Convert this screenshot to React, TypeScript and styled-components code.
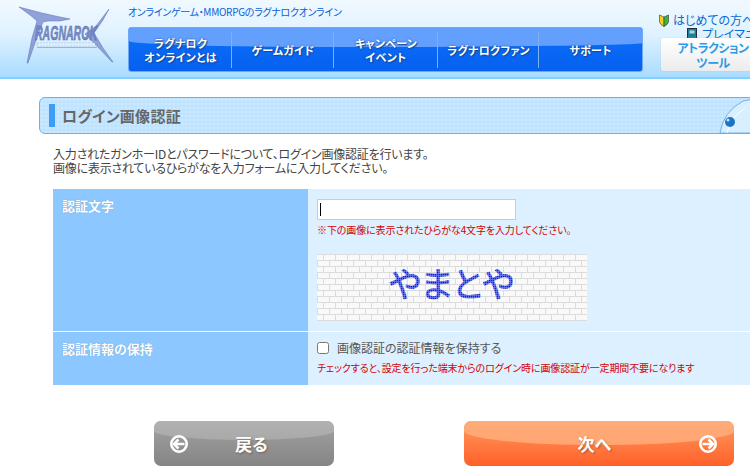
import React from "react";
import styled, { createGlobalStyle } from "styled-components";

const Global = createGlobalStyle`
  html, body { margin: 0; padding: 0; background: #fff; overflow: hidden; }
  body { width: 750px; height: 469px; font-family: "Noto Sans CJK JP", "Liberation Sans", sans-serif; font-feature-settings: "palt"; }
  #root { width: 750px; height: 469px; overflow: hidden; }
`;

const Header = styled.header`
  height: 77px;
  border-bottom: 2px solid #7fd2ff;
  background: linear-gradient(#f1f9ff 0%, #dff2ff 45%, #a9dcff 100%);
  display: flex;
  overflow: hidden;
`;
const LogoBox = styled.div`
  width: 128px;
  flex: none;
  padding: 4px 0 0 18px;
  box-sizing: border-box;
`;
const Center = styled.div`
  width: 515px;
  flex: none;
  display: flex;
  flex-direction: column;
`;
const Tagline = styled.div`
  height: 27px;
  padding-top: 5px;
  box-sizing: border-box;
  font-size: 10px;
  line-height: 14px;
  letter-spacing: -0.3px;
  color: #0a5fd8;
  white-space: nowrap;
`;
const Nav = styled.nav`
  position: relative;
  height: 45px;
  box-sizing: border-box;
  border: 1px solid #6ea6f8;
  border-radius: 3px;
  background: linear-gradient(#0b70fa, #0660f0);
  display: grid;
  grid-template-columns: 103px 102px 104px 101px 1fr;
  overflow: hidden;
  &::before {
    content: "";
    position: absolute;
    left: 0;
    right: 0;
    top: -30px;
    height: 49px;
    background: #639ffc;
    border-radius: 0 0 60% 40% / 0 0 4px 6px;
  }
`;
const NavItem = styled.div<{ $last?: boolean }>`
  position: relative;
  display: flex;
  align-items: center;
  justify-content: center;
  text-align: center;
  font-size: 11px;
  line-height: 14px;
  font-weight: 700;
  color: #fff;
  letter-spacing: 0.3px;
  text-shadow: 0 0 2px #164a9c, 1px 1px 1px #164a9c;
  &::after {
    content: "";
    display: ${(p) => (p.$last ? "none" : "block")};
    position: absolute;
    right: 0;
    top: 4px;
    bottom: 3px;
    width: 1px;
    background: #7fb0f0;
  }
`;
const Side = styled.div`
  width: 120px;
  flex: none;
  margin-left: 16px;
  font-size: 12px;
  line-height: 14px;
  color: #0a6ad0;
  white-space: nowrap;
  position: relative;
  & svg { flex: none; }
`;
const SideLink = styled.div<{ $indent: number; $top: number; $gap: number }>`
  display: flex;
  align-items: center;
  gap: ${(p) => p.$gap}px;
  padding-left: ${(p) => p.$indent}px;
  margin-top: ${(p) => p.$top}px;
`;
const ToolButton = styled.div`
  position: absolute;
  left: 2px;
  top: 38px;
  width: 104px;
  height: 33px;
  box-sizing: border-box;
  border-radius: 2px;
  background: linear-gradient(#ffffff, #ececec);
  box-shadow: 0 0 1px #9bb;
  color: #2b9be8;
  font-size: 12px;
  line-height: 15px;
  letter-spacing: -0.5px;
  font-weight: 700;
  text-align: center;
  padding-top: 2px;
`;

const Main = styled.main`
  padding-top: 18px;
`;
const TitleBar = styled.div`
  position: relative;
  margin-left: 39px;
  width: 720px;
  height: 37px;
  box-sizing: border-box;
  border: 1px solid #62b4f5;
  border-radius: 6px;
  background-color: #c0e4ff;
  background-image: radial-gradient(#cdeaff 1px, transparent 1px);
  background-size: 4px 4px;
  display: flex;
  align-items: center;
  padding-left: 9px;
  overflow: hidden;
`;
const TitleMark = styled.span`
  width: 6px;
  height: 23px;
  background: #3c9cf8;
  margin-right: 7px;
`;
const TitleText = styled.h1`
  margin: 0;
  font-size: 15px;
  font-weight: 700;
  letter-spacing: 0.3px;
  color: #666;
  line-height: 20px;
`;
const Corner = styled.svg`
  position: absolute;
  right: -1px;
  top: 0;
`;
const Intro = styled.p`
  margin: 13px 0 14px 53px;
  font-size: 12px;
  line-height: 14px;
  letter-spacing: -0.22px;
  color: #444;
  white-space: nowrap;
`;
const Table = styled.div`
  margin-left: 53px;
  display: flex;
  flex-direction: column;
  gap: 1px;
`;
const Row = styled.div<{ $h: number }>`
  display: grid;
  grid-template-columns: 255px 442px;
  height: ${(p) => p.$h}px;
`;
const Label = styled.div<{ $top: number }>`
  background: #8cc8ff;
  padding: ${(p) => p.$top}px 0 0 9px;
  font-size: 13px;
  line-height: 14px;
  font-weight: 700;
  color: #fff;
  text-shadow: 0 0 1px #5d8fc0;
`;
const Cell = styled.div<{ $top: number }>`
  background: #ddf0ff;
  padding: ${(p) => p.$top}px 0 0 9px;
`;
const InputWrap = styled.div`
  position: relative;
  width: 199px;
  height: 21px;
`;
const TextInput = styled.input`
  width: 100%;
  height: 100%;
  box-sizing: border-box;
  border: 1px solid #ccc;
  background: #fff;
  padding: 0;
  display: block;
  outline: none;
`;
const Caret = styled.span`
  position: absolute;
  left: 3px;
  top: 4px;
  width: 1px;
  height: 13px;
  background: #000;
`;
const Note = styled.div<{ $top: number }>`
  margin-top: ${(p) => p.$top}px;
  font-size: 10px;
  line-height: 13px;
  letter-spacing: -0.12px;
  color: #d40000;
  white-space: nowrap;
`;
const Captcha = styled.svg`
  display: block;
  margin-top: 18px;
`;
const CheckRow = styled.label`
  display: flex;
  align-items: center;
  font-size: 12px;
  line-height: 15px;
  color: #555;
`;
const Check = styled.input`
  width: 12px;
  height: 12px;
  margin: 0 8px 0 0;
  flex: none;
`;
const Actions = styled.div`
  margin-top: 36px;
  padding-left: 154px;
  display: flex;
  gap: 130px;
`;
const ActionButton = styled.div<{ $w: number; $next?: boolean }>`
  position: relative;
  width: ${(p) => p.$w}px;
  height: 45px;
  box-sizing: border-box;
  border-radius: 7px;
  overflow: hidden;
  display: flex;
  align-items: center;
  color: #fff;
  font-size: 17px;
  font-weight: 700;
  text-shadow: 1px 1px 2px rgba(80, 50, 30, 0.45);
  background: ${(p) =>
    p.$next ? "linear-gradient(#ff9a5e, #ff6029)" : "linear-gradient(#a2a2a2, #858585)"};
  justify-content: ${(p) => (p.$next ? "flex-end" : "flex-start")};
  gap: ${(p) => (p.$next ? 88 : 47)}px;
  padding: ${(p) => (p.$next ? "0 17px 0 0" : "0 0 0 16px")};
  &::before {
    content: "";
    position: absolute;
    left: 0;
    right: 0;
    top: -20px;
    height: ${(p) => (p.$next ? 44 : 39)}px;
    border-radius: 0 0 50% 50% / 0 0 ${(p) => (p.$next ? 14 : 9)}px ${(p) => (p.$next ? 14 : 9)}px;
    background: ${(p) =>
      p.$next ? "linear-gradient(#ffb081, #ffa572)" : "linear-gradient(#bababa, #a9a9a9)"};
  }
  & > * { position: relative; }
`;

const Logo = () => (
  <svg width="96" height="60" viewBox="0 0 96 60">
    <g fill="#8ea1d8" stroke="#5e70b0" strokeWidth="0.5">
      <polygon points="1,3 24,9 42,13 52,15 42,17 30,17 25,18 18,36 10,59 9,59 14,34 19,17 12,11" />
      <polygon points="91,5 85,16 76,29 85,44 95,58 94,58 78,41 67,30 78,22" />
    </g>
    <text
      x="17"
      y="36"
      fontFamily="'Liberation Sans', sans-serif"
      fontStyle="italic"
      fontWeight="700"
      fontSize="20"
      fill="#7a8ecb"
      stroke="#4b5d9e"
      strokeWidth="0.5"
      textLength="62"
      lengthAdjust="spacingAndGlyphs"
    >
      RAGNAROK
    </text>
    <rect x="19" y="39" width="58" height="3" fill="#e6eefc" stroke="#9fb0dc" strokeWidth="0.5" strokeDasharray="2 1" />
    <rect x="19" y="43" width="60" height="1" fill="#9fb0dc" />
  </svg>
);

const Sprout = () => (
  <svg width="10" height="13" viewBox="0 0 10 13">
    <path d="M0.5 1 L5 3 V12.5 L2 10.5 Q0.5 9 0.5 7Z" fill="#f0d020" stroke="#333" strokeWidth="0.6" />
    <path d="M9.5 1 L5 3 V12.5 L8 10.5 Q9.5 9 9.5 7Z" fill="#3cb43c" stroke="#333" strokeWidth="0.6" />
  </svg>
);
const Book = () => (
  <svg width="10" height="13" viewBox="0 0 10 13">
    <rect x="0.5" y="0.5" width="9" height="12" fill="#1e7f96" stroke="#1c3040" />
    <rect x="2.5" y="2.5" width="5" height="3" fill="#9fd8e6" />
    <rect x="1" y="11" width="8" height="1" fill="#dde" />
  </svg>
);
const CircleArrow = ({ left }: { left?: boolean }) => (
  <svg width="18" height="18" viewBox="0 0 18 18" fill="none" stroke="#fff" strokeWidth="2.6">
    <circle cx="9" cy="9" r="7.7" />
    {left ? <path d="M14.5 9H4.5M8.5 4.5L4 9l4.5 4.5" /> : <path d="M3.5 9H13.5M9.5 4.5L14 9l-4.5 4.5" />}
  </svg>
);

export default function App() {
  return (
    <>
      <Global />
      <Header>
        <LogoBox><Logo /></LogoBox>
        <Center>
          <Tagline>オンラインゲーム・MMORPGのラグナロクオンライン</Tagline>
          <Nav>
            <NavItem>ラグナロク<br />オンラインとは</NavItem>
            <NavItem>ゲームガイド</NavItem>
            <NavItem>キャンペーン<br />イベント</NavItem>
            <NavItem>ラグナロクファン</NavItem>
            <NavItem $last>サポート</NavItem>
          </Nav>
        </Center>
        <Side>
          <SideLink $indent={0} $top={13} $gap={4}><Sprout />はじめての方へ</SideLink>
          <SideLink $indent={28} $top={0} $gap={5}><Book />プレイマニュアル</SideLink>
          <ToolButton>アトラクション<br />ツール</ToolButton>
        </Side>
      </Header>
      <Main>
        <TitleBar>
          <TitleMark />
          <TitleText>ログイン画像認証</TitleText>
          <Corner width="40" height="35" viewBox="0 0 40 35">
            <path d="M1 35 Q4 14 24 3 L40 0 V35Z" fill="#d8efff" stroke="#6fb2ea" strokeWidth="1" />
            <path d="M8 35 Q11 20 26 10" fill="none" stroke="#fff" strokeWidth="1" />
            <circle cx="11" cy="24" r="5" fill="#1f72c4" />
            <circle cx="9" cy="22" r="1.5" fill="#bfe3ff" />
          </Corner>
        </TitleBar>
        <Intro>
          入力されたガンホーIDとパスワードについて、ログイン画像認証を行います。<br />
          画像に表示されているひらがなを入力フォームに入力してください。
        </Intro>
        <Table>
          <Row $h={142}>
            <Label $top={10}>認証文字</Label>
            <Cell $top={10}>
              <InputWrap>
                <TextInput type="text" aria-label="認証文字" />
                <Caret />
              </InputWrap>
              <Note $top={3}>※下の画像に表示されたひらがな4文字を入力してください。</Note>
              <Captcha width="270" height="67" viewBox="0 0 270 67">
                <defs>
                  <pattern id="bricks" width="24" height="12" patternUnits="userSpaceOnUse">
                    <rect width="24" height="12" fill="#f9f9f9" />
                    <path d="M0 .5H24M0 6.5H24M6.5 0V6M18.5 0V6M.5 6V12M12.5 6V12" stroke="#dcdcdc" strokeWidth="1" fill="none" />
                  </pattern>
                  <pattern id="dots" width="2" height="2" patternUnits="userSpaceOnUse">
                    <rect width="2" height="2" fill="#6f80ee" />
                    <rect width="1.3" height="1.3" fill="#0d1fd0" />
                  </pattern>
                </defs>
                <rect width="270" height="67" fill="url(#bricks)" />
                <text
                  x="72"
                  y="43"
                  fontFamily="'Noto Sans CJK JP', sans-serif"
                  fontSize="34"
                  fontWeight="400"
                  fill="url(#dots)"
                  stroke="url(#dots)"
                  strokeWidth="0.6"
                  letterSpacing="0"
                >
                  やまとや
                </text>
              </Captcha>
            </Cell>
          </Row>
          <Row $h={53}>
            <Label $top={10}>認証情報の保持</Label>
            <Cell $top={8}>
              <CheckRow><Check type="checkbox" />画像認証の認証情報を保持する</CheckRow>
              <Note $top={6}>チェックすると、設定を行った端末からのログイン時に画像認証が一定期間不要になります</Note>
            </Cell>
          </Row>
        </Table>
        <Actions>
          <ActionButton $w={180}><CircleArrow left /><span>戻る</span></ActionButton>
          <ActionButton $w={270} $next><span>次へ</span><CircleArrow /></ActionButton>
        </Actions>
      </Main>
    </>
  );
}
